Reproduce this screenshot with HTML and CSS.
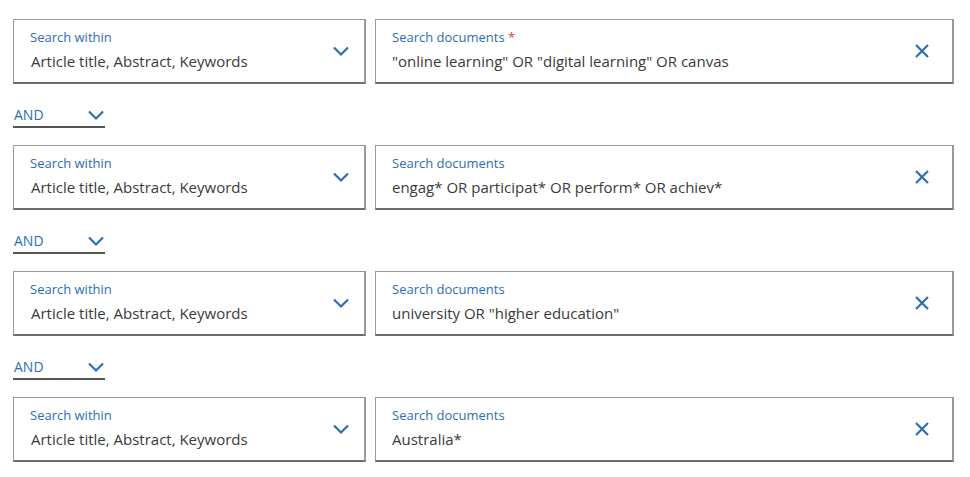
FILE: index.html
```html
<!DOCTYPE html>
<html>
<head>
<meta charset="utf-8">
<link rel="stylesheet" href="styles.css">
</head>
<body>
<div class="form">
  <div class="row">
    <div class="field select">
      <div class="texts">
        <div class="label">Search within</div>
        <div class="value">Article title, Abstract, Keywords</div>
      </div>
      <svg class="chev" width="18" height="12" viewBox="0 0 18 12"><path d="M2 2.5 L9 9.5 L16 2.5" fill="none" stroke="#2e6db4" stroke-width="2.2"/></svg>
    </div>
    <div class="field input">
      <div class="texts">
        <div class="label">Search documents <span class="req">*</span></div>
        <div class="value">"online learning" OR "digital learning" OR canvas</div>
      </div>
      <svg class="x" width="16" height="16" viewBox="0 0 16 16"><path d="M2 2 L14 14 M14 2 L2 14" fill="none" stroke="#2e6db4" stroke-width="2.2"/></svg>
    </div>
  </div>
  <div class="op"><span>AND</span><svg class="chev" width="18" height="12" viewBox="0 0 18 12"><path d="M2 2.5 L9 9.5 L16 2.5" fill="none" stroke="#2e6db4" stroke-width="2.2"/></svg></div>
  <div class="row">
    <div class="field select">
      <div class="texts">
        <div class="label">Search within</div>
        <div class="value">Article title, Abstract, Keywords</div>
      </div>
      <svg class="chev" width="18" height="12" viewBox="0 0 18 12"><path d="M2 2.5 L9 9.5 L16 2.5" fill="none" stroke="#2e6db4" stroke-width="2.2"/></svg>
    </div>
    <div class="field input">
      <div class="texts">
        <div class="label">Search documents</div>
        <div class="value">engag* OR participat* OR perform* OR achiev*</div>
      </div>
      <svg class="x" width="16" height="16" viewBox="0 0 16 16"><path d="M2 2 L14 14 M14 2 L2 14" fill="none" stroke="#2e6db4" stroke-width="2.2"/></svg>
    </div>
  </div>
  <div class="op"><span>AND</span><svg class="chev" width="18" height="12" viewBox="0 0 18 12"><path d="M2 2.5 L9 9.5 L16 2.5" fill="none" stroke="#2e6db4" stroke-width="2.2"/></svg></div>
  <div class="row">
    <div class="field select">
      <div class="texts">
        <div class="label">Search within</div>
        <div class="value">Article title, Abstract, Keywords</div>
      </div>
      <svg class="chev" width="18" height="12" viewBox="0 0 18 12"><path d="M2 2.5 L9 9.5 L16 2.5" fill="none" stroke="#2e6db4" stroke-width="2.2"/></svg>
    </div>
    <div class="field input">
      <div class="texts">
        <div class="label">Search documents</div>
        <div class="value">university OR "higher education"</div>
      </div>
      <svg class="x" width="16" height="16" viewBox="0 0 16 16"><path d="M2 2 L14 14 M14 2 L2 14" fill="none" stroke="#2e6db4" stroke-width="2.2"/></svg>
    </div>
  </div>
  <div class="op"><span>AND</span><svg class="chev" width="18" height="12" viewBox="0 0 18 12"><path d="M2 2.5 L9 9.5 L16 2.5" fill="none" stroke="#2e6db4" stroke-width="2.2"/></svg></div>
  <div class="row">
    <div class="field select">
      <div class="texts">
        <div class="label">Search within</div>
        <div class="value">Article title, Abstract, Keywords</div>
      </div>
      <svg class="chev" width="18" height="12" viewBox="0 0 18 12"><path d="M2 2.5 L9 9.5 L16 2.5" fill="none" stroke="#2e6db4" stroke-width="2.2"/></svg>
    </div>
    <div class="field input">
      <div class="texts">
        <div class="label">Search documents</div>
        <div class="value">Australia*</div>
      </div>
      <svg class="x" width="16" height="16" viewBox="0 0 16 16"><path d="M2 2 L14 14 M14 2 L2 14" fill="none" stroke="#2e6db4" stroke-width="2.2"/></svg>
    </div>
  </div>
</div>
</body>
</html>
```
FILE: styles.css
```css
html, body {
  margin: 0;
  padding: 0;
  background: #ffffff;
}
body {
  font-family: "Open Sans", "Noto Sans", sans-serif;
  color: #3a3a3a;
}
.form {
  padding: 19px 0 0 13px;
  width: 941px;
  display: flex;
  flex-direction: column;
}
.row {
  display: flex;
  gap: 9px;
  height: 65px;
}
.field {
  box-sizing: border-box;
  height: 65px;
  border: 1px solid #9a9a9a;
  border-bottom: 2px solid #6e6e6e;
  border-right-width: 2px;
  display: flex;
  align-items: center;
  padding: 0 22px 0 16px;
}
.select {
  width: 353px;
}
.input {
  width: 579px;
  padding-right: 22px;
}
.texts {
  flex: 1;
  display: flex;
  flex-direction: column;
  gap: 6px;
  padding-bottom: 2px;
}
.label {
  font-size: 13px;
  line-height: 16px;
  color: #2e6db4;
}
.req {
  color: #d43a3a;
}
.value {
  font-size: 15px;
  line-height: 20px;
  color: #3a3a3a;
  padding-left: 1px;
}
.input .value {
  padding-left: 0;
}
.select .chev {
  margin-right: -8px;
}
.op {
  height: 61px;
  display: flex;
  align-items: center;
  justify-content: space-between;
  width: 92px;
  box-sizing: border-box;
  padding-top: 0;
  background: linear-gradient(#555, #555) no-repeat left 42px / 92px 2px;
}
.op span {
  font-size: 14px;
  color: #2e6db4;
  line-height: 20px;
  padding-left: 1px;
}
```
